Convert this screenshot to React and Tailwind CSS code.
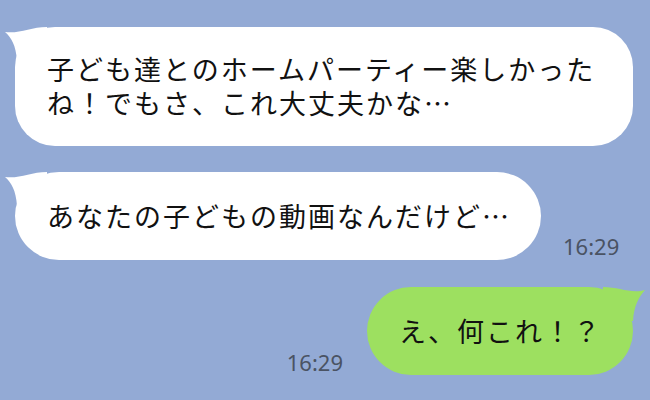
import React from "react";

const font = { fontFamily: '"Noto Sans CJK JP", "Noto Sans", sans-serif' };
const timeFont = { fontFamily: '"Noto Sans", "Liberation Sans", sans-serif' };

function LeftTail() {
  return (
    <svg className="absolute" style={{ left: -12, top: -2 }} width="50" height="50" viewBox="0 0 50 50">
      <path d="M44 2 C28 2 16 9 2 7 C8 12 13 20 14 36 L44 36 Z" fill="#ffffff" />
    </svg>
  );
}

function RightTail() {
  return (
    <svg className="absolute" style={{ right: -14, top: -2 }} width="50" height="50" viewBox="0 0 50 50">
      <path d="M6 2 C22 2 34 9 48 5 C42 12 37 20 36 36 L6 36 Z" fill="#9de060" />
    </svg>
  );
}

export default function App() {
  return (
    <div className="w-[650px] h-[400px] overflow-hidden bg-[#93aad5] flex flex-col pt-[27px] pl-[15px] pr-[17px]" style={font}>
      <div className="relative bg-white rounded-[40px] h-[119px] w-[618px] pl-[32px] pt-[25px] text-[27px] leading-[34px] tracking-[2px] text-[#111]">
        <LeftTail />
        <div className="relative">
          子ども達とのホームパーティー楽しかった
          <br />
          ね！でもさ、これ大丈夫かな…
        </div>
      </div>
      <div className="flex items-end mt-[26px]">
        <div className="relative bg-white rounded-[44px] h-[88px] w-[526px] pl-[32px] flex items-center text-[27px] leading-[34px] tracking-[2px] text-[#111]">
          <LeftTail />
          <div className="relative">あなたの子どもの動画なんだけど…</div>
        </div>
        <div className="ml-[22px] mb-[3px] text-[22px] leading-[22px] text-[#4a5363]" style={timeFont}>16:29</div>
      </div>
      <div className="flex items-end justify-end mt-[27px]">
        <div className="mr-[24px] mb-[2px] text-[22px] leading-[22px] text-[#4a5363]" style={timeFont}>16:29</div>
        <div className="relative bg-[#9de060] rounded-[44px] h-[88px] w-[266px] pl-[32px] flex items-center text-[27px] leading-[34px] tracking-[2px] text-[#111]">
          <RightTail />
          <div className="relative">え、何これ！？</div>
        </div>
      </div>
    </div>
  );
}
